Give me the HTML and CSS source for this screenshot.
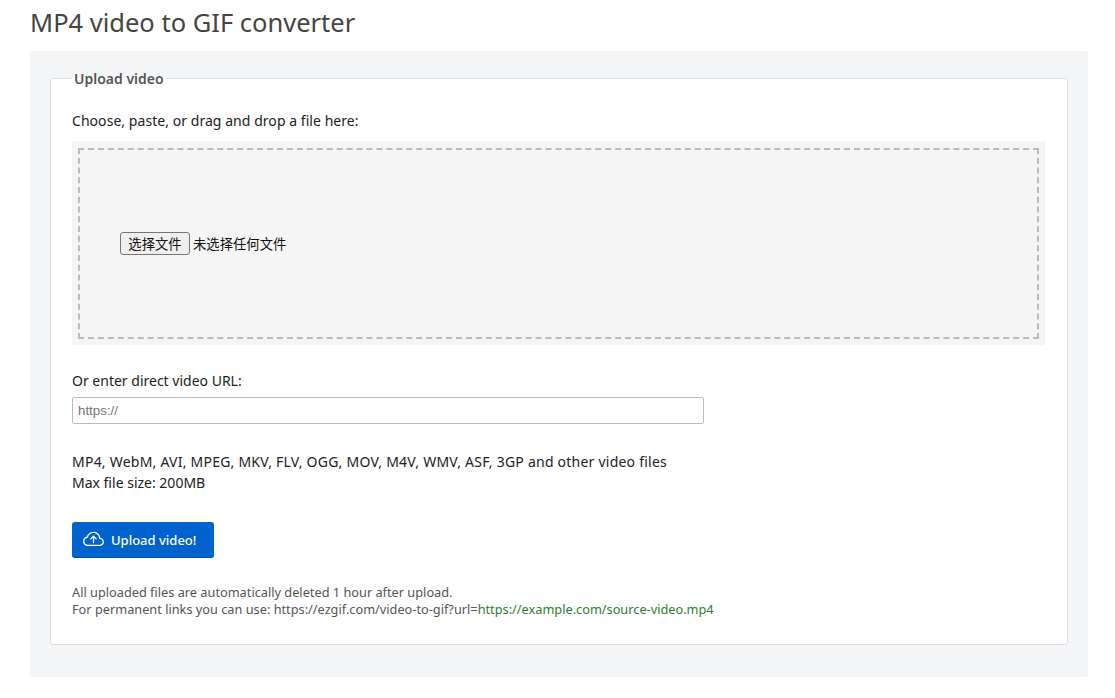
FILE: index.html
```html
<!DOCTYPE html>
<html lang="en">
<head>
<meta charset="utf-8">
<title>MP4 video to GIF converter</title>
<link rel="stylesheet" href="styles.css">
</head>
<body>
<main class="page">
  <h1 class="title">MP4 video to GIF converter</h1>
  <div class="panel">
    <form class="form">
      <fieldset class="box">
        <legend class="box-legend">Upload video</legend>
        <p class="prompt">Choose, paste, or drag and drop a file here:</p>
        <div class="drop-outer">
          <div class="drop-inner">
            <button type="button" class="file-btn">选择文件</button>
            <span class="file-name">未选择任何文件</span>
          </div>
        </div>
        <label class="url-label" for="url">Or enter direct video URL:</label>
        <input class="url-input" id="url" type="text" placeholder="https://">
        <p class="formats"><span class="formats-list">MP4, WebM, AVI, MPEG, MKV, FLV, OGG, MOV, M4V, WMV, ASF, 3GP and other video files</span><br>Max file size: 200MB</p>
        <button type="button" class="upload-btn">
          <svg class="upload-icon" viewBox="0 0 16 16" fill="currentColor" aria-hidden="true">
            <path fill-rule="evenodd" d="M7.646 5.146a.5.5 0 0 1 .708 0l2 2a.5.5 0 0 1-.708.708L8.5 6.707V10.5a.5.5 0 0 1-1 0V6.707L6.354 7.854a.5.5 0 1 1-.708-.708l2-2z"/>
            <path d="M4.406 3.342A5.53 5.53 0 0 1 8 2c2.69 0 4.923 2 5.166 4.579C14.758 6.804 16 8.137 16 9.773 16 11.569 14.502 13 12.687 13H3.781C1.708 13 0 11.366 0 9.318c0-1.763 1.266-3.223 2.942-3.593.143-.863.698-1.723 1.464-2.383zm.653.757c-.757.653-1.153 1.44-1.153 2.056v.448l-.445.049C2.064 6.805 1 7.952 1 9.318 1 10.785 2.23 12 3.781 12h8.906C13.98 12 15 10.988 15 9.773c0-1.216-1.02-2.228-2.313-2.228h-.5v-.5C12.188 4.825 10.328 3 8 3a4.53 4.53 0 0 0-2.941 1.1z"/>
          </svg>
          <span>Upload video!</span>
        </button>
        <p class="note">All uploaded files are automatically deleted 1 hour after upload.<br>For permanent links you can use: https://ezgif.com/video-to-gif?url=<a class="note-link" href="#">https://example.com/source-video.mp4</a></p>
      </fieldset>
    </form>
  </div>
</main>
</body>
</html>
```

FILE: styles.css
```css
* { box-sizing: border-box; }
html, body { margin: 0; padding: 0; background: #fff; }
body {
  font-family: "Noto Sans", "Noto Sans CJK SC", sans-serif;
  font-size: 14px;
  color: #222;
}
.page { padding: 0 27px 0 30px; }
.title {
  margin: 0;
  height: 51px;
  padding-top: 5px;
  font-size: 25.5px;
  line-height: 34px;
  font-weight: 400;
  color: #444;
}
.panel {
  background: #f4f5f7;
  border-radius: 3px;
  padding: 16px 20px 0;
  height: 626px;
}
.form { margin: 0; }
.box {
  margin: 0;
  min-width: 0;
  height: 578px;
  padding: 0 21px;
  border: 1px solid #dcdee2;
  border-radius: 3px;
  background: #fff;
}
.box-legend {
  padding: 2px 2px 0;
  font-size: 14px;
  line-height: 20px;
  font-weight: 600;
  color: #555;
}
.prompt {
  margin: 22px 0 0;
  line-height: 20px;
  letter-spacing: 0.05px;
  color: #222;
}
.drop-outer {
  margin-top: 10px;
  width: 973px;
  height: 204px;
  padding: 7px 6px;
  background: #f5f5f5;
}
.drop-inner {
  height: 191px;
  padding-left: 40px;
  display: flex;
  align-items: center;
  gap: 3px;
  border: 2px dashed #bbb;
}
.file-btn {
  width: 70px;
  height: 23px;
  padding: 0;
  font-family: "Noto Sans CJK SC", sans-serif;
  font-size: 13.33px;
  color: #111;
  background: #efefef;
  border: 1px solid #767676;
  border-radius: 3px;
}
.file-name {
  font-family: "Noto Sans CJK SC", sans-serif;
  font-size: 13.33px;
  color: #111;
}
.url-label {
  display: block;
  margin-top: 26px;
  line-height: 20px;
  color: #222;
}
.url-input {
  display: block;
  margin-top: 6px;
  width: 632px;
  height: 27px;
  padding: 0 5px;
  font-family: "Liberation Sans", sans-serif;
  font-size: 13.33px;
  border: 1px solid #bbb;
  border-radius: 2px;
  background: #fff;
}
.url-input::placeholder { color: #757575; opacity: 1; }
.formats {
  margin: 27px 0 0;
  line-height: 21px;
  color: #222;
}
.formats-list { letter-spacing: 0.23px; }
.upload-btn {
  margin-top: 29px;
  width: 142px;
  height: 36px;
  padding: 0 0 0 11px;
  display: flex;
  align-items: center;
  gap: 7px;
  font-family: "Noto Sans", sans-serif;
  font-size: 13px;
  font-weight: 500;
  color: #fff;
  background: #0062cc;
  border: 0;
  border-bottom: 1px solid #0050a8;
  border-radius: 3px;
}
.upload-icon { width: 21px; height: 21px; flex: none; }
.note {
  margin: 26px 0 0;
  font-size: 12.75px;
  line-height: 17px;
  color: #555;
}
.note-link { color: #2e7d32; text-decoration: none; }
```
